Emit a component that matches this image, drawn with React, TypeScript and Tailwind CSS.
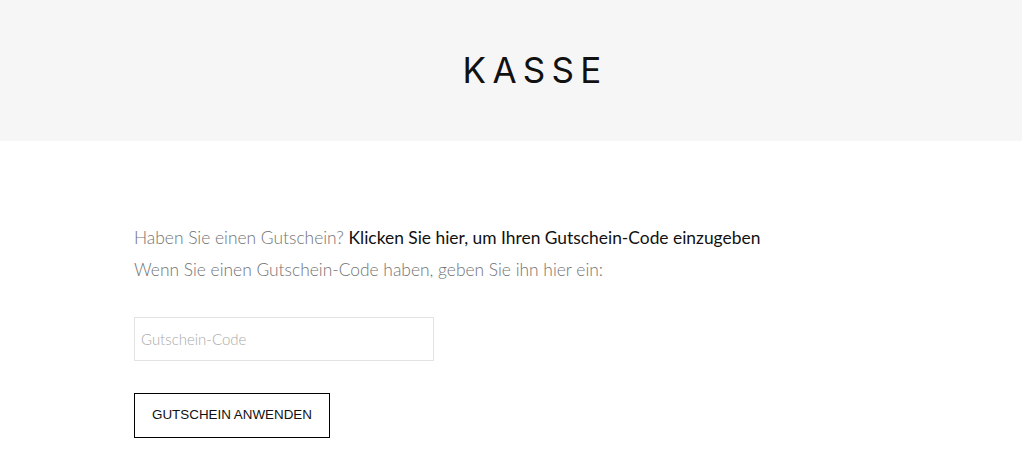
import { useState } from "react";

const App = () => {
  const [code, setCode] = useState("");

  return (
    <div className="min-h-screen bg-white font-['Lato','Noto_Sans',sans-serif]">
      <header className="h-[141px] bg-[#f6f6f6] flex items-center justify-center pl-[42px]">
        <h1 className="text-[35px] font-['Inter','Lato',sans-serif] font-normal tracking-[0.18em] text-[#111] pl-[0.18em] leading-none">
          KASSE
        </h1>
      </header>

      <main className="pl-[134px] pt-[81px]">
        <p className="text-[17.4px] font-light leading-[32px] text-[#737373]">
          Haben Sie einen Gutschein?{" "}
          <a href="#" className="text-[#111] font-normal">
            Klicken Sie hier, um Ihren Gutschein-Code einzugeben
          </a>
        </p>
        <p className="text-[17.4px] font-light leading-[32px] text-[#737373]">
          Wenn Sie einen Gutschein-Code haben, geben Sie ihn hier ein:
        </p>

        <form className="flex flex-col items-start mt-[31px]" onSubmit={(e) => e.preventDefault()}>
          <input
            value={code}
            onChange={(e) => setCode(e.target.value)}
            placeholder="Gutschein-Code"
            className="w-[300px] h-[44px] border border-[#e3e3e3] px-[6px] text-[15px] font-light text-[#333] placeholder:text-[#aaa] outline-none"
          />
          <button
            type="submit"
            className="mt-[32px] w-[196px] h-[45px] border border-black bg-white font-['Liberation_Sans',Arial,sans-serif] text-[13.4px] text-[#111] uppercase"
          >
            Gutschein anwenden
          </button>
        </form>
      </main>
    </div>
  );
};

export default App;
